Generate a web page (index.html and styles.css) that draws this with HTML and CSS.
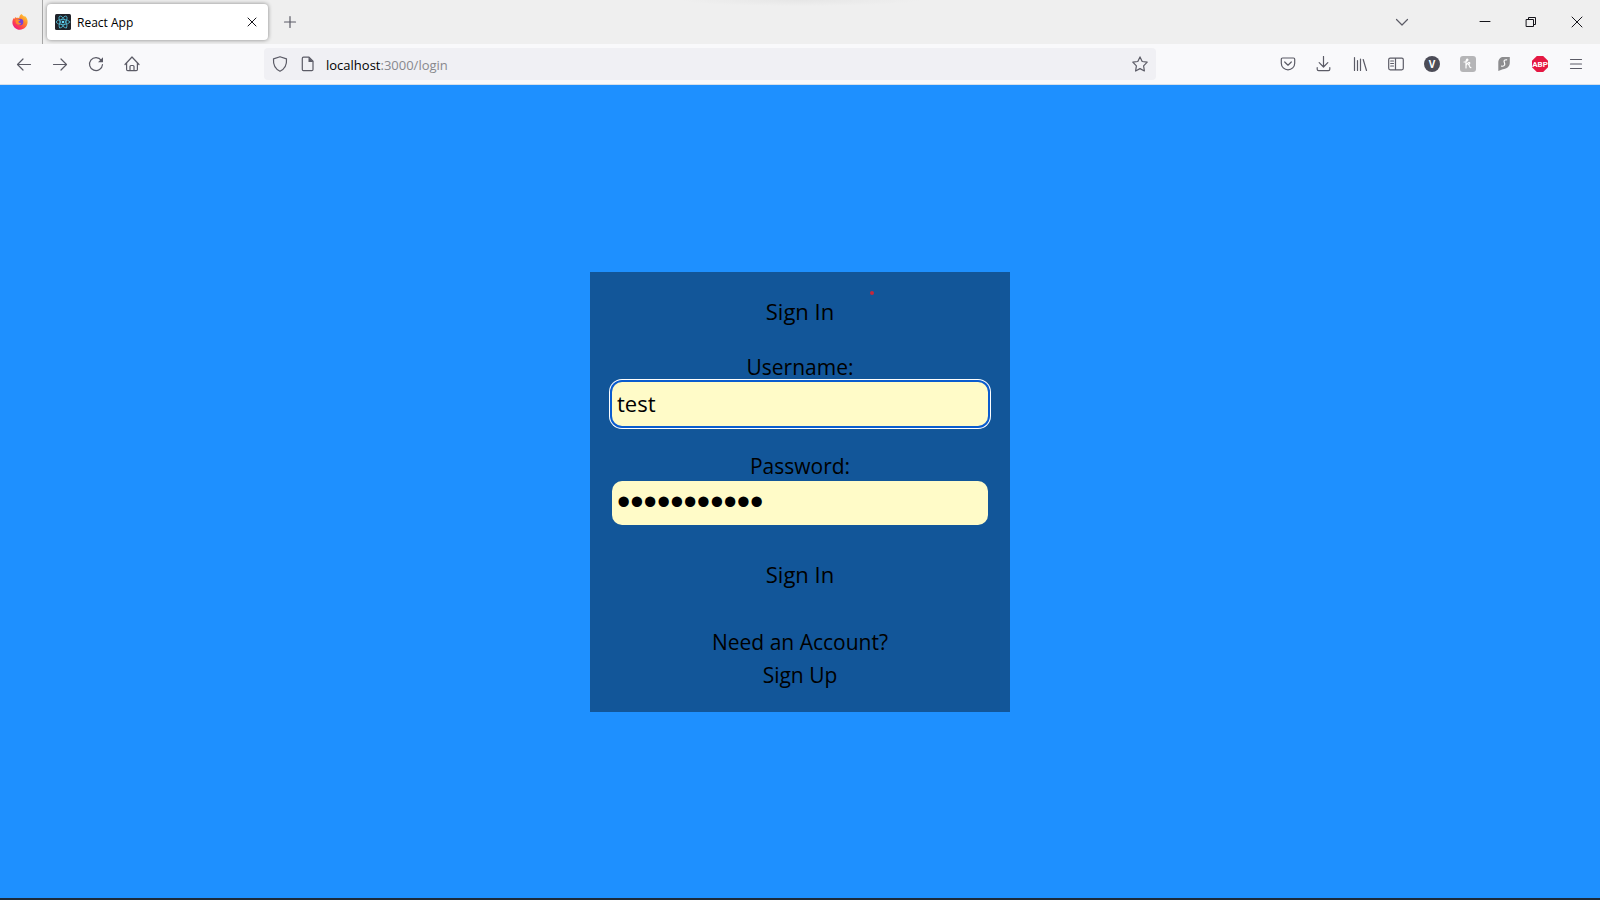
FILE: index.html
```html
<!DOCTYPE html>
<html lang="en">
<head>
<meta charset="utf-8">
<meta name="viewport" content="width=device-width, initial-scale=1">
<title>React App</title>
<link rel="stylesheet" href="styles.css">
</head>
<body>
<div class="window">
  <header class="tabbar">
    <div class="pinned">
      <svg class="i16" viewBox="0 0 16 16" aria-hidden="true">
        <defs>
          <linearGradient id="fox" x1="1" y1="0" x2="0.2" y2="1"><stop offset="0" stop-color="#ffe14a"/><stop offset=".4" stop-color="#ff9028"/><stop offset=".75" stop-color="#ff3d50"/><stop offset="1" stop-color="#e8168a"/></linearGradient>
        </defs>
        <path fill="url(#fox)" d="M9.6 0c.8 1.200 2 1.800 2.600 2.700.5-.1.4-.6.4-1C14.500 3 15.800 5.500 15.600 8.300 15.400 12.500 12 15.700 8 15.700S.4 12.500.4 8.400c0-2 .7-3.700 1.500-4.500l.3 1c.5-1 1-1.500 1.700-2l.1 1.200c1-.4 2.400-.3 3.200.1C7.200 2.600 8 .9 9.600 0z"/>
        <circle cx="8" cy="8" r="3.300" fill="#7542d8"/>
        <path fill="#ff8a2b" d="M3.600 5.800c1.600-1 3.200-.6 4.600.5-.4 1-1.700.8-1.900 1.800.6 1 1.900 1.200 3 .7-.9 2.700-4.300 2.200-5.300.1-.5-1-.6-2-.4-3.100z"/>
      </svg>
    </div>
    <div class="tab">
      <svg class="i16" viewBox="0 0 16 16" aria-hidden="true">
        <rect width="16" height="16" rx="1.500" fill="#20232a"/>
        <g fill="none" stroke="#53bcd6" stroke-width=".8"><ellipse cx="8" cy="8" rx="6.700" ry="2.600"/><ellipse cx="8" cy="8" rx="6.700" ry="2.600" transform="rotate(60 8 8)"/><ellipse cx="8" cy="8" rx="6.700" ry="2.600" transform="rotate(120 8 8)"/></g>
        <circle cx="8" cy="8" r="1.300" fill="#61dafb"/>
      </svg>
      <span class="tab-title">React App</span>
      <button class="icon" aria-label="Close tab"><svg class="i16" viewBox="0 0 16 16"><path class="dark" d="M4 4l8 8M12 4l-8 8"/></svg></button>
    </div>
    <button class="icon new-tab" aria-label="New tab"><svg class="i16" viewBox="0 0 16 16"><path d="M8 2.500v11M2.500 8h11"/></svg></button>
    <div class="controls">
      <button class="icon list-tabs" aria-label="List all tabs"><svg class="i16" viewBox="0 0 16 16"><path d="M2.500 5.500L8 11l5.500-5.500"/></svg></button>
      <button class="icon control" aria-label="Minimize"><svg class="i16" viewBox="0 0 16 16"><path class="dark" d="M3 7.500h10"/></svg></button>
      <button class="icon control" aria-label="Restore"><svg class="i16" viewBox="0 0 16 16"><path class="dark" d="M3.500 5.500h7v7h-7zM5.500 5.500v-2h7v7h-2"/></svg></button>
      <button class="icon control" aria-label="Close"><svg class="i16" viewBox="0 0 16 16"><path class="dark" d="M3 3l10 10M13 3L3 13"/></svg></button>
    </div>
  </header>

  <nav class="toolbar" aria-label="Browser toolbar">
    <div class="group nav-group">
      <button class="icon" aria-label="Back"><svg class="i16" viewBox="0 0 16 16"><path d="M14.500 8.500H1.500M7 3L1.500 8.500 7 14"/></svg></button>
      <button class="icon" aria-label="Forward"><svg class="i16" viewBox="0 0 16 16"><path d="M1.500 8.500h13M9 3l5.500 5.500L9 14"/></svg></button>
      <button class="icon" aria-label="Reload"><svg class="i16" viewBox="0 0 16 16"><path d="M13.300 4.300A6.500 6.500 0 1 0 14.500 8.500"/><path class="solid" d="M15 1.200v5H10z"/></svg></button>
      <button class="icon" aria-label="Home"><svg class="i16" viewBox="0 0 16 16"><path d="M1 8.500L8 1l7 7.500M2.600 7v6.500c0 .7.500 1.200 1.200 1.200h8.400c.7 0 1.200-.5 1.200-1.200V7M6 14.500v-4c0-.6.400-1 1-1h2c.6 0 1 .4 1 1v4"/></svg></button>
    </div>
    <div class="urlbar">
      <button class="icon small" aria-label="Tracking protection"><svg class="i16" viewBox="0 0 16 16"><path d="M8 .7l6.500 2.200c.4 5-1.500 10-6.500 12.400C3 12.900 1.100 7.900 1.500 2.900z"/></svg></button>
      <button class="icon small" aria-label="Site information"><svg class="i16" viewBox="0 0 16 16"><path d="M3.500 1.200h5.500l4 4v8.300c0 .7-.5 1.200-1.200 1.200H3.500c-.7 0-1.200-.5-1.200-1.200V2.400c0-.7.500-1.200 1.200-1.200z"/><path class="solid" d="M8.500 1v5H13.500z"/></svg></button>
      <span class="url">localhost<span class="path">:3000/login</span></span>
      <button class="icon small" aria-label="Bookmark this page"><svg class="i16" viewBox="0 0 16 16"><path d="M8 .9l2.200 4.600 5 .7-3.600 3.600.8 5.200L8 12.600 3.600 15l.8-5.200L.8 6.200l5-.7z"/></svg></button>
    </div>
    <div class="group tools">
      <button class="icon" aria-label="Pocket"><svg class="i16" viewBox="0 0 16 16"><path d="M2.500 2h11c.7 0 1.200.5 1.200 1.200v4a6.700 6.700 0 0 1-13.400 0v-4C1.300 2.500 1.800 2 2.500 2z"/><path d="M4.700 6L8 9.200 11.300 6"/></svg></button>
      <button class="icon" aria-label="Downloads"><svg class="i16" viewBox="0 0 16 16"><path d="M7.500.5v10.500M3.200 6.700L7.500 11l4.300-4.300M1.200 11.500v1.700c0 .8.600 1.400 1.400 1.400h9.800c.8 0 1.400-.6 1.400-1.400v-1.700"/></svg></button>
      <button class="icon" aria-label="Library"><svg class="i16" viewBox="0 0 16 16"><path d="M2.500 1.500v13M5.500 4.500v10M8.500 3v11.500M11.200 3.500l3.300 11"/></svg></button>
      <button class="icon" aria-label="Sidebars"><svg class="i16" viewBox="0 0 16 16"><rect x=".7" y="2.200" width="14.600" height="11.600" rx="1.500"/><path d="M7.500 2.500v11M2.700 5h2.800M2.700 7.500h2.800M2.700 10h2.800"/></svg></button>
      <button class="icon" aria-label="Account"><span class="disc">V</span></button>
      <button class="icon" aria-label="Honey"><svg class="i16" viewBox="0 0 16 16"><rect width="16" height="16" rx="3" fill="#b5b5b7" stroke="none"/><path stroke="#fff" d="M4 6C6.500 5.800 8.500 4.500 7.800 3.300 7 2.500 6 4 6 6v6M6 9.500C7 7 10 5.500 9.800 7.200 9.600 8.200 8.300 8.500 8.300 8.500c1.500.3.9 3.500 2.600 3.100"/></svg></button>
      <button class="icon" aria-label="Surfshark"><svg class="i16" viewBox="0 0 16 16"><path fill="#8d8d8f" stroke="none" d="M7.500 1h6.300v5.500c0 4-2.800 6.300-7 6.700L2.300 15V6.500C2.300 3 4.500 1 7.500 1z"/><path stroke="#fff" d="M10.700 3.800c-2-.2-2.900.6-2.600 1.900.3 1.300 1 2 .5 3.200-.4 1.200-1.600 1.500-3 1.300"/></svg></button>
      <button class="icon" aria-label="Adblock Plus"><span class="octagon">ABP</span></button>
      <button class="icon" aria-label="Menu"><svg class="i16" viewBox="0 0 16 16"><path d="M2.500 3.500h11M2.500 8h11M2.500 12.500h11"/></svg></button>
    </div>
  </nav>

  <main class="page">
    <section class="card">
      <span class="pointer"></span>
      <h1 class="heading">Sign In</h1>
      <form class="form">
        <label class="label" for="user">Username:</label>
        <input class="field focused" id="user" type="text" value="test" autocomplete="off">
        <label class="label second" for="pass">Password:</label>
        <input class="field password" id="pass" type="password" value="password123">
        <button class="submit" type="button">Sign In</button>
      </form>
      <p class="account">Need an Account?<br><a class="link" href="#signup">Sign Up</a></p>
    </section>
  </main>
</div>
</body>
</html>
```
FILE: styles.css
```css
* { box-sizing: border-box; }

body {
  margin: 0;
  font-family: "Open Sans", "Noto Sans", sans-serif;
  color: #000;
}

button, input { font: inherit; color: inherit; }

.window {
  display: flex;
  flex-direction: column;
  min-height: 100vh;
  border-bottom: 2px solid #1c2a3a;
}

.i16 {
  display: block;
  flex: none;
  width: 16px;
  height: 16px;
  fill: none;
  stroke: #5b5b66;
  stroke-width: 1.2;
  stroke-linecap: round;
  stroke-linejoin: round;
}

.pinned .i16, .tab > .i16 { stroke: none; }
.solid { fill: #5b5b66; stroke: none; }
.dark { stroke: #15141a; stroke-width: 1; }

.icon {
  display: flex;
  align-items: center;
  justify-content: center;
  flex: none;
  width: 36px;
  height: 32px;
  padding: 0;
  border: 0;
  background: none;
}

.small { width: 28px; }

.tabbar {
  display: flex;
  align-items: center;
  height: 44px;
  background: radial-gradient(ellipse 120px 6px at 50% 0, #e6e6e6, #efefef) #efefef;
}

.pinned {
  display: flex;
  align-items: center;
  justify-content: center;
  align-self: stretch;
  width: 43px;
  padding-right: 3px;
  border-right: 1px solid #a6a6a6;
}

.tab {
  display: flex;
  align-items: center;
  gap: 6px;
  width: 221px;
  height: 36px;
  margin-left: 4px;
  padding-left: 8px;
  border-radius: 4px;
  background: #fff;
  box-shadow: 0 0 4px rgba(0, 0, 0, 0.45);
  font-size: 12px;
}

.tab .icon { width: 32px; }
.tab-title { flex: 1; }
.new-tab { margin-left: 4px; }

.controls {
  display: flex;
  margin-left: auto;
}

.control { width: 46px; }
.list-tabs { margin-right: 42px; }

.toolbar {
  display: flex;
  align-items: center;
  height: 41px;
  border-bottom: 1px solid #d5dfea;
  background: #f9f9fb;
}

.group { display: flex; }
.nav-group { padding-left: 6px; }
.tools { margin-left: auto; padding-right: 6px; }

.urlbar {
  display: flex;
  align-items: center;
  flex: 0 1 892px;
  height: 32px;
  margin-left: 114px;
  padding: 0 2px;
  border-radius: 4px;
  background: #f0f0f4;
}

.url {
  flex: 1;
  padding: 2px 0 0 4px;
  font-size: 13px;
}

.path { color: #88888d; }

.disc, .octagon {
  display: flex;
  align-items: center;
  justify-content: center;
  width: 16px;
  height: 16px;
  color: #fff;
  font-weight: 700;
}

.disc {
  border-radius: 50%;
  background: #4c4c57;
  font-size: 10px;
}

.octagon {
  background: #e51943;
  clip-path: polygon(30% 0, 70% 0, 100% 30%, 100% 70%, 70% 100%, 30% 100%, 0 70%, 0 30%);
  font-family: Roboto, sans-serif;
  font-size: 8px;
}

.page {
  display: flex;
  align-items: center;
  justify-content: center;
  flex: 1;
  background: #1e90ff;
}

.card {
  position: relative;
  width: 100%;
  max-width: 420px;
  padding: 23px 22px 20px;
  background: #125699;
  font-size: 22px;
  line-height: 32px;
  text-align: center;
}

.pointer {
  position: absolute;
  top: 19px;
  left: 280px;
  width: 4px;
  height: 4px;
  border-radius: 50%;
  background: #c4283c;
}

.heading {
  margin: 0 0 25px;
  font-size: inherit;
  font-weight: 400;
}

.form {
  display: flex;
  flex-direction: column;
}

.label, .account { font-size: 21px; }

.label { line-height: 30px; }

.second { margin-top: 25px; }

.field {
  width: 100%;
  height: 44px;
  padding: 0 5px 2px;
  border: 0;
  border-radius: 10px;
  outline: 0;
  background: #fffbc8;
}

.password {
  padding-bottom: 0;
  font-family: "Liberation Sans", sans-serif;
  font-size: 38px;
}

.focused { box-shadow: 0 0 0 2px #0a5ccf, 0 0 0 3px #fff; }

.submit {
  margin-top: 33px;
  padding: 0;
  border: 0;
  background: none;
}

.account {
  margin: 36px 0 0;
  line-height: 33px;
}

.link {
  color: inherit;
  text-decoration: none;
}
```
